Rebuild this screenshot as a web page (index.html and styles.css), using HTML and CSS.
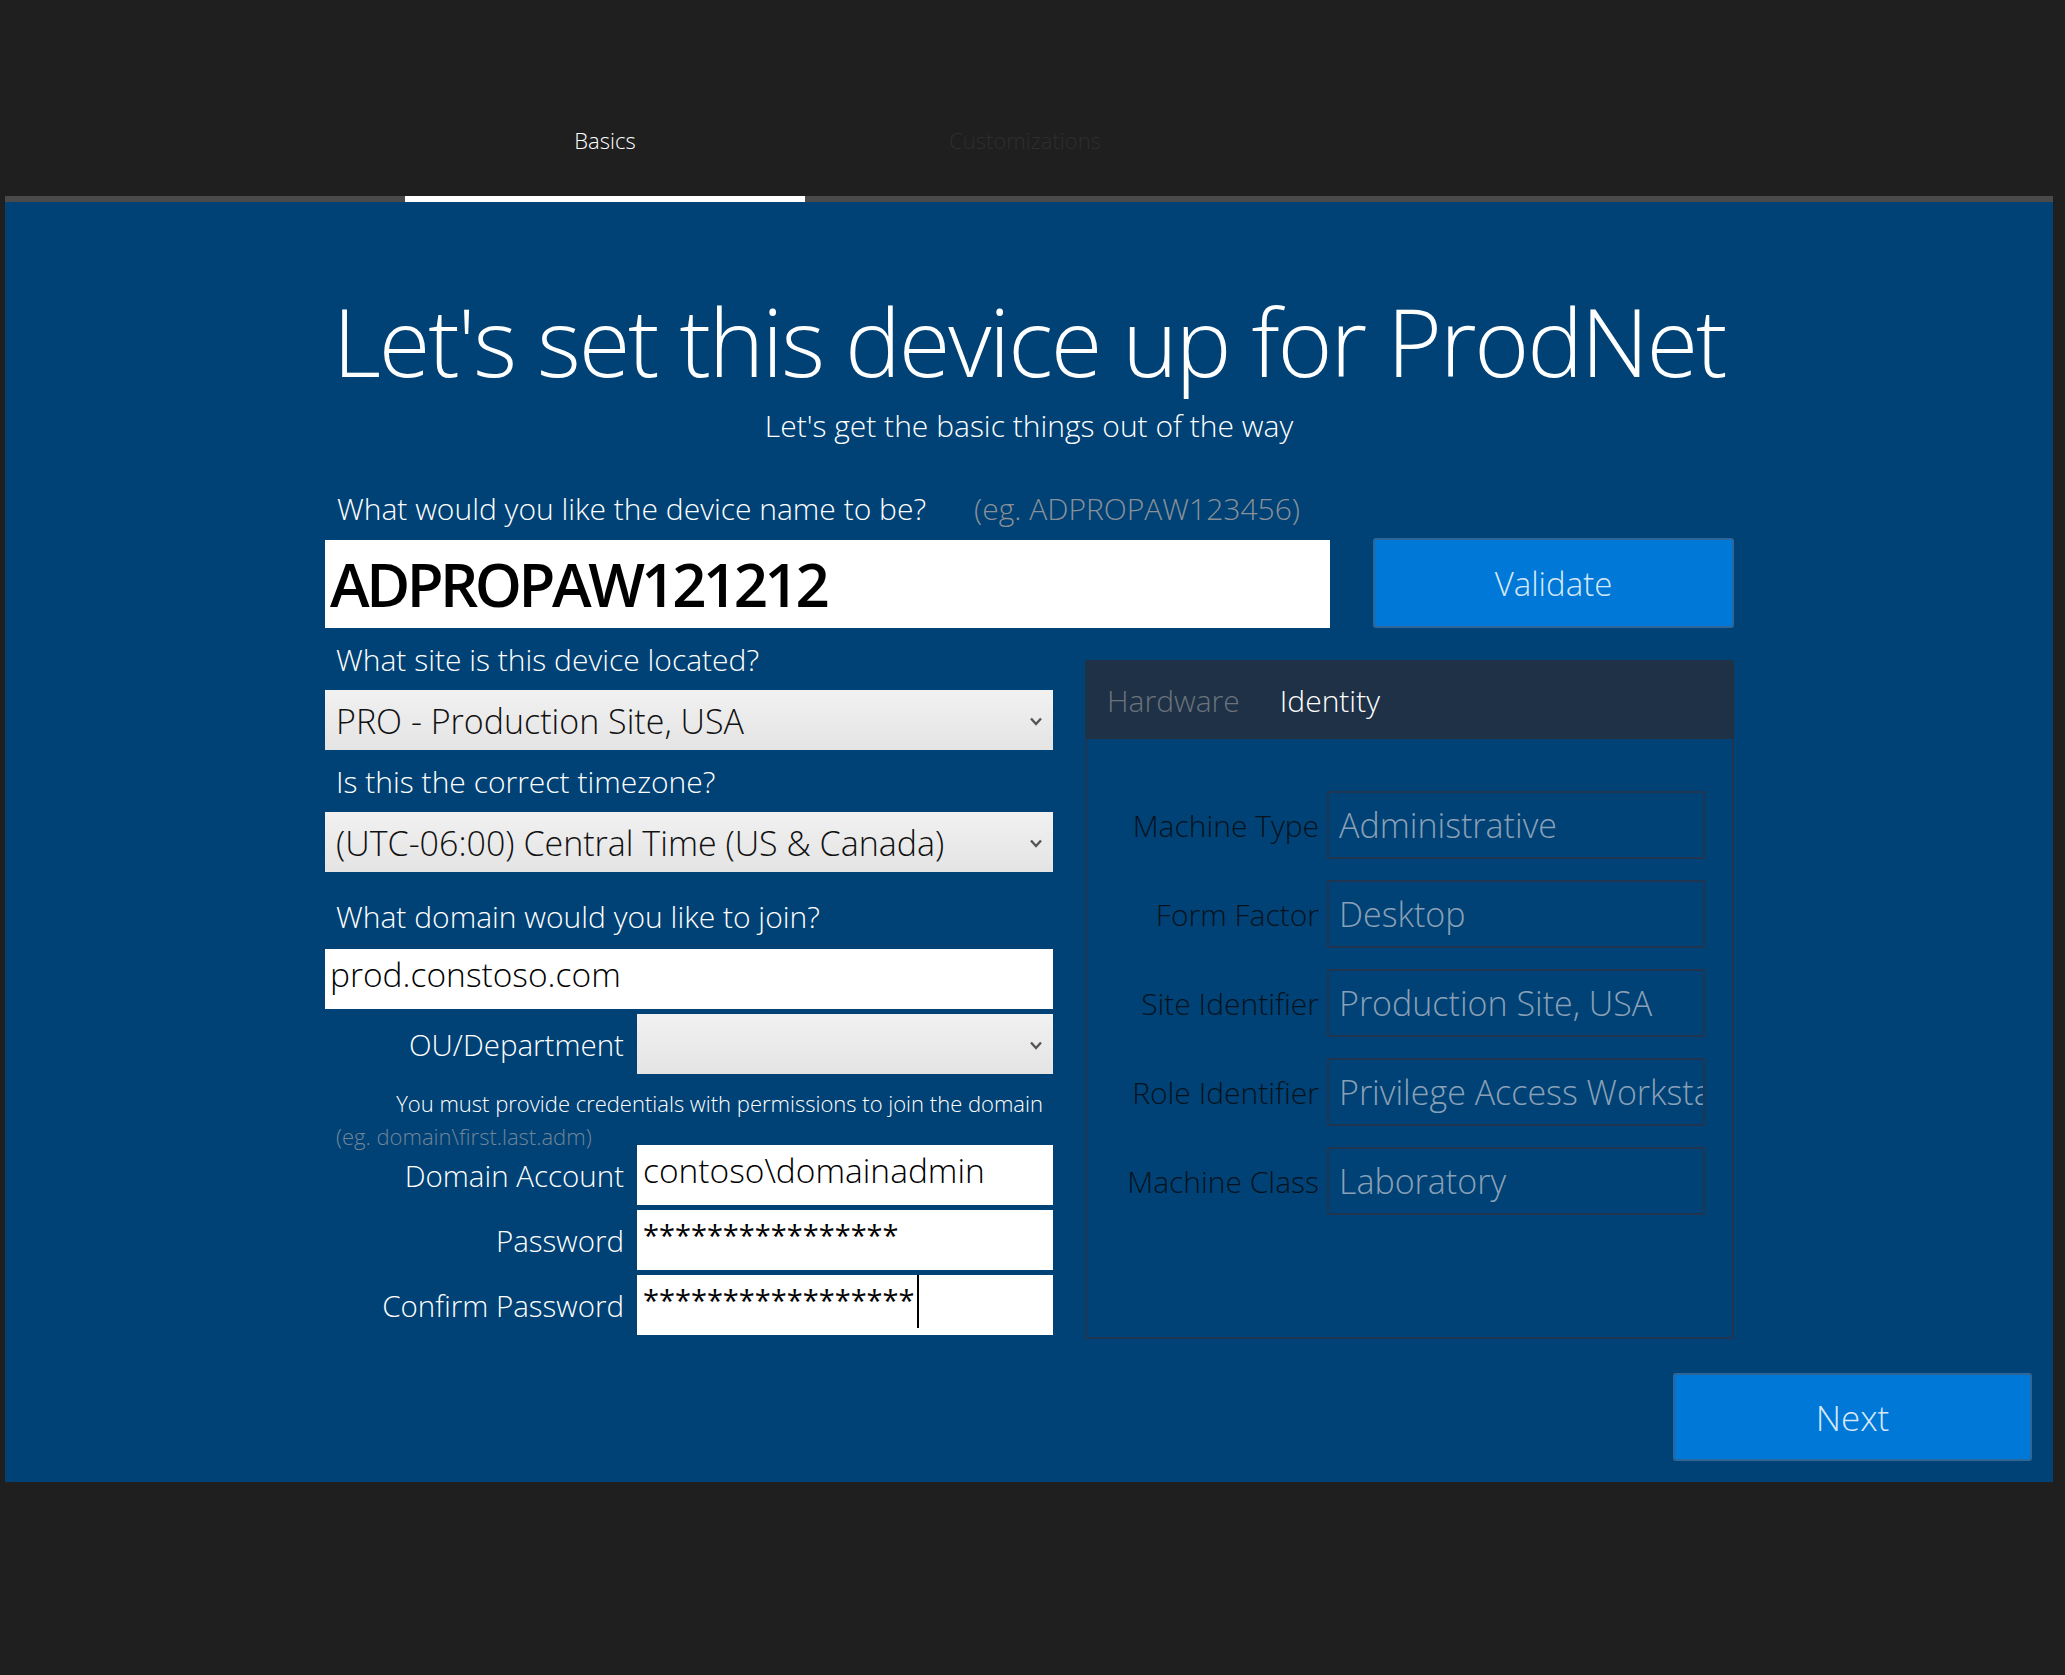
FILE: index.html
```html
<!DOCTYPE html>
<html lang="en">
<head>
  <meta charset="UTF-8" />
  <meta name="viewport" content="width=device-width, initial-scale=1.0"/>
  <title>Device Setup - ProdNet</title>
  <link rel="stylesheet" href="styles.css">
</head>
<body>
  <header class="steps">
    <div class="step active">Basics</div>
    <div class="step">Customizations</div>
  </header>
  <div class="progress"><div class="progress-fill"></div></div>

  <main class="panel">
    <h1>Let's set this device up for ProdNet</h1>
    <p class="subtitle">Let's get the basic things out of the way</p>

    <section class="form">
      <div class="name-label">What would you like the device name to be?<span class="hint">(eg. ADPROPAW123456)</span></div>
      <div class="name-row">
        <div class="field name-field">ADPROPAW121212</div>
        <button class="btn validate">Validate</button>
      </div>

      <div class="columns">
        <div class="left">
          <div class="q q-first">What site is this device located?</div>
          <div class="select">
            <span>PRO - Production Site, USA</span>
            <svg class="chev" width="12" height="9" viewBox="0 0 12 9"><path d="M1 1.5 L6 7 L11 1.5" fill="none" stroke="#555" stroke-width="2.4"/></svg>
          </div>
          <div class="q">Is this the correct timezone?</div>
          <div class="select">
            <span>(UTC-06:00) Central Time (US &amp; Canada)</span>
            <svg class="chev" width="12" height="9" viewBox="0 0 12 9"><path d="M1 1.5 L6 7 L11 1.5" fill="none" stroke="#555" stroke-width="2.4"/></svg>
          </div>
          <div class="q q-domain">What domain would you like to join?</div>
          <div class="field text-field">prod.constoso.com</div>

          <div class="row row-ou">
            <label>OU/Department</label>
            <div class="select small-select">
              <span></span>
              <svg class="chev" width="12" height="9" viewBox="0 0 12 9"><path d="M1 1.5 L6 7 L11 1.5" fill="none" stroke="#555" stroke-width="2.4"/></svg>
            </div>
          </div>
          <div class="note">You must provide credentials with permissions to join the domain</div>
          <div class="eg">(eg. domain\first.last.adm)</div>
          <div class="row row-account">
            <label>Domain Account</label>
            <div class="field text-field">contoso\domainadmin</div>
          </div>
          <div class="row">
            <label>Password</label>
            <div class="field pw-field">****************</div>
          </div>
          <div class="row">
            <label>Confirm Password</label>
            <div class="field pw-field">*****************<span class="caret"></span></div>
          </div>
        </div>

        <div class="info">
          <div class="info-tabs">
            <span class="info-tab">Hardware</span>
            <span class="info-tab current">Identity</span>
          </div>
          <div class="info-body">
            <div class="info-row"><label>Machine Type</label><div class="info-value">Administrative</div></div>
            <div class="info-row"><label>Form Factor</label><div class="info-value">Desktop</div></div>
            <div class="info-row"><label>Site Identifier</label><div class="info-value">Production Site, USA</div></div>
            <div class="info-row"><label>Role Identifier</label><div class="info-value">Privilege Access Workstation</div></div>
            <div class="info-row"><label>Machine Class</label><div class="info-value">Laboratory</div></div>
          </div>
        </div>
      </div>
    </section>

    <div class="actions">
      <button class="btn next">Next</button>
    </div>
  </main>
</body>
</html>
```

FILE: styles.css
```css
body {
  margin: 0;
  font-family: 'Open Sans', 'Noto Sans', sans-serif;
  font-weight: 300;
  background-color: #1f1f1f;
  color: #fff;
}

/* wizard steps */
.steps {
  display: flex;
  height: 196px;
  padding-left: 405px;
  box-sizing: border-box;
}

.step {
  width: 400px;
  margin-right: 20px;
  padding-top: 125px;
  font-size: 22px;
  line-height: 30px;
  text-align: center;
  color: #2e2e2e;
}

.step.active {
  color: #fff;
}

.progress {
  height: 6px;
  margin: 0 12px 0 5px;
  background-color: #4a4a4a;
}

.progress-fill {
  width: 400px;
  height: 100%;
  margin-left: 400px;
  background-color: #fff;
}

/* main blue panel */
.panel {
  display: flex;
  flex-direction: column;
  width: 2048px;
  height: 1280px;
  margin-left: 5px;
  padding-top: 92px;
  box-sizing: border-box;
  background-color: #004275;
}

h1 {
  margin: 0;
  font-size: 94px;
  line-height: 94px;
  font-weight: 300;
  letter-spacing: -2.2px;
  text-align: center;
}

.subtitle {
  margin: 23px 0 0;
  font-size: 30px;
  line-height: 30px;
  text-align: center;
}

.form {
  width: 1409px;
  margin: 53px 0 0 320px;
}

.name-label {
  padding-left: 12px;
  font-size: 30px;
  line-height: 30px;
}

.hint {
  margin-left: 48px;
  color: #8a9098;
}

.name-row {
  display: flex;
  align-items: flex-end;
  gap: 43px;
  margin-top: 14px;
}

.field {
  background-color: #fff;
  color: #000;
  box-sizing: border-box;
  white-space: nowrap;
  overflow: hidden;
}

.name-field {
  width: 1005px;
  height: 88px;
  padding-left: 5px;
  font-size: 60px;
  line-height: 88px;
  font-weight: 600;
  letter-spacing: -3.5px;
}

.btn {
  font-family: inherit;
  font-weight: 300;
  background-color: #0078d7;
  color: #d6e8f7;
  border: 2px solid #2d6799;
  border-radius: 3px;
  cursor: pointer;
}

.validate {
  width: 361px;
  height: 90px;
  font-size: 33px;
}

.columns {
  display: flex;
  gap: 32px;
}

.left {
  width: 728px;
}

.q {
  margin-top: 17px;
  padding-left: 11px;
  font-size: 30px;
  line-height: 30px;
}

.q-domain {
  margin-top: 30px;
}

.select {
  display: flex;
  align-items: center;
  justify-content: space-between;
  height: 60px;
  margin-top: 15px;
  padding: 2px 11px 0;
  box-sizing: border-box;
  background: linear-gradient(to bottom, #f1f1f1, #e4e4e4);
  color: #111;
  font-size: 34px;
  white-space: nowrap;
}

.text-field {
  height: 60px;
  padding: 0 5px 10px;
  font-size: 33.5px;
  line-height: 50px;
}

.left > .text-field {
  margin-top: 17px;
}

.row {
  display: flex;
  align-items: center;
  gap: 13px;
  margin-top: 5px;
}

.row label {
  width: 299px;
  text-align: right;
  font-size: 29.5px;
}

.row .field,
.row .select {
  width: 416px;
  margin-top: 0;
}

.row .text-field {
  padding-left: 6px;
}

.row-account {
  margin-top: -6px;
}

.pw-field {
  height: 60px;
  padding-left: 6px;
  font-size: 29px;
  line-height: 50px;
  font-weight: 400;
}

.caret {
  display: inline-block;
  width: 2px;
  height: 53px;
  margin-left: 2px;
  vertical-align: top;
  background-color: #000;
}

.note {
  margin-top: 14px;
  padding-right: 10px;
  text-align: right;
  font-size: 22px;
  line-height: 30px;
}

.eg {
  margin-top: 3px;
  padding-left: 11px;
  font-size: 22px;
  line-height: 30px;
  color: #71859a;
}

/* identity panel */
.info {
  width: 649px;
  margin-top: 32px;
}

.info-tabs {
  display: flex;
  gap: 40px;
  height: 79px;
  padding: 3px 0 0 22px;
  box-sizing: border-box;
  background-color: #1e3146;
  font-size: 30px;
  line-height: 76px;
}

.info-tab {
  color: #6b737c;
}

.info-tab.current {
  color: #fff;
}

.info-body {
  display: flex;
  flex-direction: column;
  gap: 21px;
  height: 600px;
  padding: 52px 27px 0 0;
  box-sizing: border-box;
  border: 2px solid #1f3550;
  border-top: none;
}

.info-row {
  display: flex;
  align-items: center;
  gap: 8px;
}

.info-row label {
  flex: 1;
  text-align: right;
  font-size: 30px;
  color: #07121d;
}

.info-value {
  width: 378px;
  height: 68px;
  padding-left: 10px;
  box-sizing: border-box;
  border: 2px solid #1f3550;
  font-size: 34px;
  line-height: 64px;
  color: #8aa0b7;
  white-space: nowrap;
  overflow: hidden;
}

.actions {
  display: flex;
  justify-content: flex-end;
  margin-top: auto;
  padding: 0 21px 21px 0;
}

.next {
  width: 359px;
  height: 88px;
  font-size: 35px;
}
```
